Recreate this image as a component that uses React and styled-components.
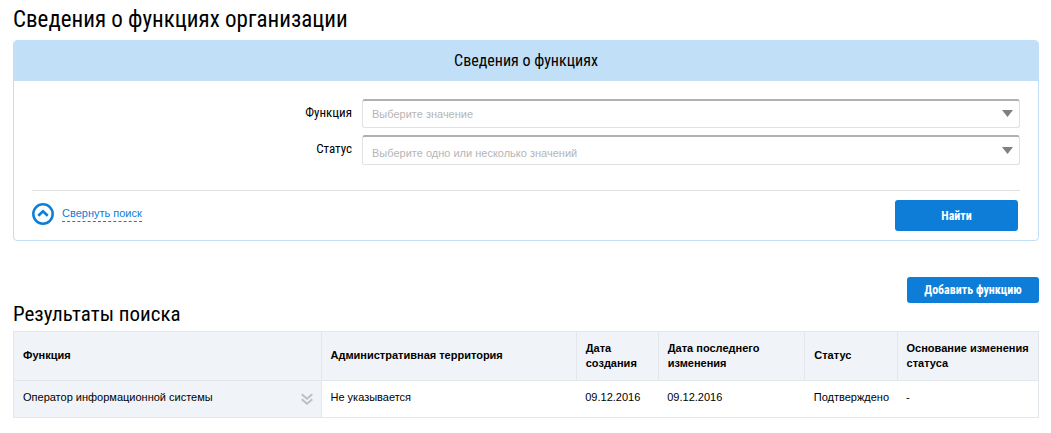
import React from 'react';
import styled, { createGlobalStyle } from 'styled-components';

const condensed = '"Roboto Condensed", "Liberation Sans Narrow", Roboto, sans-serif';
const blue = '#0d7dd8';

const GlobalStyle = createGlobalStyle`
  body {
    background: #fff;
    color: #000;
    font-family: "Liberation Sans", Arial, sans-serif;
    font-size: 11px;
    margin: 0;
  }
`;

const Page = styled.main`
  padding: 6px 12px 15px 13px;
`;

const Heading = styled.h1`
  font-family: ${condensed};
  font-size: 23px;
  font-weight: 400;
  line-height: 28px;
  margin: 0;
`;

const ResultsHeading = styled(Heading)`
  font-size: 21px;
  line-height: 22px;
  padding-bottom: 6px;
`;

const Panel = styled.form`
  border: 1px solid #c1dff7;
  border-radius: 4px;
  box-sizing: border-box;
  margin-top: 6px;
  overflow: hidden;
`;

const PanelTitle = styled.h2`
  background: #c1dff7;
  font-family: ${condensed};
  font-size: 16px;
  font-weight: 400;
  line-height: 40px;
  margin: 0;
  text-align: center;
`;

const Fields = styled.div`
  display: flex;
  flex-direction: column;
  gap: 7px;
  padding: 18px;
`;

const Field = styled.div`
  align-items: center;
  display: grid;
  gap: 10px;
  grid-template-columns: 320px 1fr;
`;

const Label = styled.label`
  font-family: ${condensed};
  font-size: 13px;
  line-height: 20px;
  padding-bottom: 2px;
  text-align: right;
`;

const SelectBox = styled.div`
  align-items: center;
  display: grid;
`;

const Select = styled.select`
  appearance: none;
  background: #fff;
  border: 1px solid #dfe1e3;
  border-radius: 3px;
  border-top: 2px solid #b0b0b0;
  box-sizing: border-box;
  color: #b5b5b5;
  font-family: inherit;
  font-size: 11px;
  grid-area: 1 / 1;
  height: ${props => (props.$low ? '30px' : '29px')};
  padding: ${props => (props.$low ? '5px 30px 0 9px' : '0 30px 0 9px')};
  width: 100%;
`;

const Arrow = styled.svg`
  grid-area: 1 / 1;
  justify-self: end;
  margin-right: 7px;
  pointer-events: none;
`;

const PanelFooter = styled.div`
  align-items: flex-start;
  border-top: 1px solid #e0e0e0;
  display: flex;
  justify-content: space-between;
  margin: 7px 18px 0;
  padding: 9px 2px 9px 0;
`;

const Collapse = styled.a`
  align-items: center;
  color: ${blue};
  display: flex;
  gap: 8px;
  padding-top: 3px;
  text-decoration: none;
`;

const CollapseText = styled.span`
  border-bottom: 1px dashed ${blue};
  line-height: 15px;
`;

const Button = styled.button`
  background: ${blue};
  border: 0;
  border-radius: 3px;
  color: #fff;
  cursor: pointer;
  font-family: ${condensed};
  font-size: 12px;
  font-weight: 700;
  height: ${props => (props.$wide ? '31px' : '26px')};
  padding: 0;
  width: ${props => (props.$wide ? '123px' : '132px')};
`;

const Actions = styled.div`
  display: flex;
  justify-content: flex-end;
  margin-top: 36px;
`;

const Table = styled.table`
  border-collapse: collapse;
  table-layout: fixed;
  width: 100%;
`;

const Th = styled.th`
  background: #f0f4f8;
  border: 1px solid #e1e7eb;
  box-sizing: border-box;
  height: 49px;
  line-height: 15px;
  padding: 0 0 1px 9px;
  text-align: left;
`;

const Td = styled.td`
  background: ${props => (props.$shaded ? '#f0f4f8' : '#fff')};
  border-bottom: 1px solid #e1e7eb;
  border-left: ${props => (props.$shaded ? '1px solid #e1e7eb' : '0')};
  border-right: ${props => (props.$shaded || props.$last ? '1px solid #e1e7eb' : '0')};
  box-sizing: border-box;
  height: 37px;
  line-height: 15px;
  padding: 0 0 3px 9px;
`;

const FunctionCell = styled.div`
  align-items: center;
  display: flex;
  justify-content: space-between;
  padding-right: 8px;
`;

const Expand = styled.button`
  background: none;
  border: 0;
  cursor: pointer;
  display: flex;
  padding: 2px 0 0;
`;

const columns = [
  { title: 'Функция', width: '30%' },
  { title: 'Административная территория', width: '24.9%' },
  { title: 'Дата создания', width: '8%' },
  { title: 'Дата последнего изменения', width: '14.3%' },
  { title: 'Статус', width: '9%' },
  { title: 'Основание изменения статуса' },
];

const rows = [
  {
    name: 'Оператор информационной системы',
    cells: ['Не указывается', '09.12.2016', '09.12.2016', 'Подтверждено', '-'],
  },
];

function SelectField({ id, label, placeholder, low }) {
  return (
    <Field>
      <Label htmlFor={id}>{label}</Label>
      <SelectBox>
        <Select id={id} $low={low}>
          <option>{placeholder}</option>
        </Select>
        <Arrow width="11" height="7" viewBox="0 0 11 7" aria-hidden="true">
          <path d="M0 0h11L5.5 7z" fill="#808080" />
        </Arrow>
      </SelectBox>
    </Field>
  );
}

function SearchPanel() {
  return (
    <Panel onSubmit={e => e.preventDefault()}>
      <PanelTitle>Сведения о функциях</PanelTitle>
      <Fields>
        <SelectField id="function" label="Функция" placeholder="Выберите значение" />
        <SelectField
          id="status"
          label="Статус"
          placeholder="Выберите одно или несколько значений"
          low
        />
      </Fields>
      <PanelFooter>
        <Collapse href="#search">
          <svg width="22" height="22" viewBox="0 0 22 22" fill="none" stroke={blue} aria-hidden="true">
            <circle cx="11" cy="11" r="9.7" strokeWidth="2.5" />
            <path d="M6.3 12.8 11 8.3l4.7 4.5" strokeWidth="2.6" />
          </svg>
          <CollapseText>Свернуть поиск</CollapseText>
        </Collapse>
        <Button type="submit" $wide>Найти</Button>
      </PanelFooter>
    </Panel>
  );
}

function ResultsTable() {
  return (
    <Table>
      <colgroup>
        {columns.map(column => (
          <col key={column.title} style={{ width: column.width }} />
        ))}
      </colgroup>
      <thead>
        <tr>
          {columns.map(column => (
            <Th key={column.title} scope="col">{column.title}</Th>
          ))}
        </tr>
      </thead>
      <tbody>
        {rows.map(row => (
          <tr key={row.name}>
            <Td $shaded>
              <FunctionCell>
                {row.name}
                <Expand type="button" aria-label="Развернуть">
                  <svg width="12" height="12" viewBox="0 0 12 12" fill="none" stroke="#bdbfc1" strokeWidth="2">
                    <path d="M.7 1.2 6 5.7l5.3-4.5M.7 6.2 6 10.7l5.3-4.5" />
                  </svg>
                </Expand>
              </FunctionCell>
            </Td>
            {row.cells.map((cell, index) => (
              <Td key={columns[index + 1].title} $last={index === row.cells.length - 1}>{cell}</Td>
            ))}
          </tr>
        ))}
      </tbody>
    </Table>
  );
}

function App() {
  return (
    <>
      <GlobalStyle />
      <Page>
        <Heading>Сведения о функциях организации</Heading>
        <SearchPanel />
        <Actions>
          <Button type="button">Добавить функцию</Button>
        </Actions>
        <ResultsHeading as="h2">Результаты поиска</ResultsHeading>
        <ResultsTable />
      </Page>
    </>
  );
}

export default App;
